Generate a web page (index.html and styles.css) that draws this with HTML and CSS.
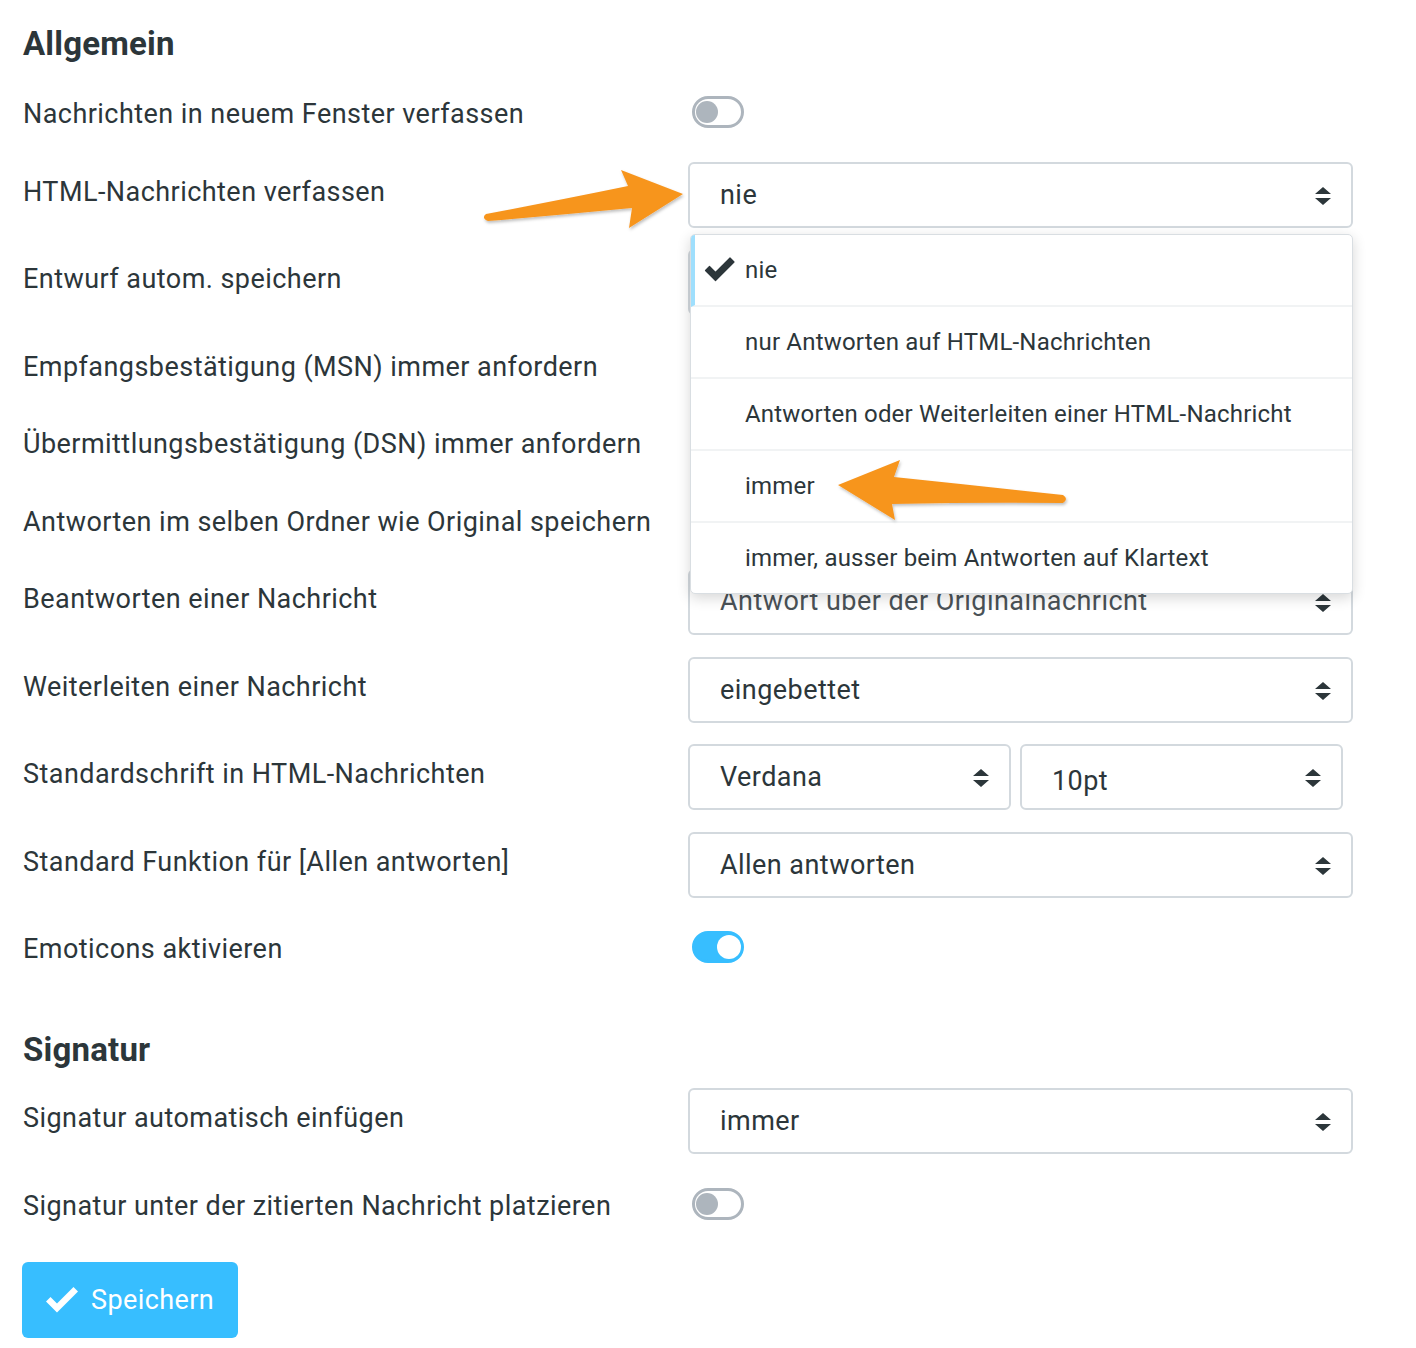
FILE: index.html
```html
<!DOCTYPE html>
<html lang="de">
<head>
<meta charset="utf-8">
<title>Einstellungen</title>
<link rel="stylesheet" href="styles.css">
</head>
<body>
<div class="page">
  <h2 class="section-title">Allgemein</h2>

  <div class="row row-toggle">
    <div class="label">Nachrichten in neuem Fenster verfassen</div>
    <div class="control"><span class="switch"></span></div>
  </div>

  <div class="row row-select">
    <div class="label">HTML-Nachrichten verfassen</div>
    <div class="control">
      <div class="select">nie<span class="caret"><svg viewBox="0 0 16 20" width="16" height="20"><path d="M8 1 L16 8 L0 8 Z M0 12 L16 12 L8 19 Z" fill="#2c363a"/></svg></span></div>
      <div class="menu">
        <div class="menu-item selected"><svg class="check" viewBox="0 0 32 26" width="32" height="26"><path d="M1.5 13.5 L5.5 9.5 L11.5 15.5 L26 1 L30 5 L11.5 23.5 Z" fill="#2c363a" stroke="#2c363a" stroke-width="1.2" stroke-linejoin="round"/></svg>nie</div>
        <div class="menu-item">nur Antworten auf HTML-Nachrichten</div>
        <div class="menu-item">Antworten oder Weiterleiten einer HTML-Nachricht</div>
        <div class="menu-item">immer</div>
        <div class="menu-item last">immer, ausser beim Antworten auf Klartext</div>
      </div>
    </div>
  </div>

  <div class="row row-select">
    <div class="label">Entwurf autom. speichern</div>
    <div class="control"><div class="select"><span class="caret"><svg viewBox="0 0 16 20" width="16" height="20"><path d="M8 1 L16 8 L0 8 Z M0 12 L16 12 L8 19 Z" fill="#2c363a"/></svg></span></div></div>
  </div>

  <div class="row row-toggle">
    <div class="label">Empfangsbestätigung (MSN) immer anfordern</div>
    <div class="control"><span class="switch"></span></div>
  </div>

  <div class="row row-toggle">
    <div class="label">Übermittlungsbestätigung (DSN) immer anfordern</div>
    <div class="control"><span class="switch"></span></div>
  </div>

  <div class="row row-toggle">
    <div class="label">Antworten im selben Ordner wie Original speichern</div>
    <div class="control"><span class="switch"></span></div>
  </div>

  <div class="row row-select">
    <div class="label">Beantworten einer Nachricht</div>
    <div class="control"><div class="select select-dim">Antwort über der Originalnachricht<span class="caret"><svg viewBox="0 0 16 20" width="16" height="20"><path d="M8 1 L16 8 L0 8 Z M0 12 L16 12 L8 19 Z" fill="#2c363a"/></svg></span></div></div>
  </div>

  <div class="row row-select">
    <div class="label">Weiterleiten einer Nachricht</div>
    <div class="control"><div class="select">eingebettet<span class="caret"><svg viewBox="0 0 16 20" width="16" height="20"><path d="M8 1 L16 8 L0 8 Z M0 12 L16 12 L8 19 Z" fill="#2c363a"/></svg></span></div></div>
  </div>

  <div class="row row-select">
    <div class="label">Standardschrift in HTML-Nachrichten</div>
    <div class="control control-split">
      <div class="select select-half">Verdana<span class="caret"><svg viewBox="0 0 16 20" width="16" height="20"><path d="M8 1 L16 8 L0 8 Z M0 12 L16 12 L8 19 Z" fill="#2c363a"/></svg></span></div>
      <div class="select select-half select-low">10pt<span class="caret"><svg viewBox="0 0 16 20" width="16" height="20"><path d="M8 1 L16 8 L0 8 Z M0 12 L16 12 L8 19 Z" fill="#2c363a"/></svg></span></div>
    </div>
  </div>

  <div class="row row-select">
    <div class="label">Standard Funktion für [Allen antworten]</div>
    <div class="control"><div class="select">Allen antworten<span class="caret"><svg viewBox="0 0 16 20" width="16" height="20"><path d="M8 1 L16 8 L0 8 Z M0 12 L16 12 L8 19 Z" fill="#2c363a"/></svg></span></div></div>
  </div>

  <div class="row row-toggle">
    <div class="label">Emoticons aktivieren</div>
    <div class="control"><span class="switch on"></span></div>
  </div>

  <h2 class="section-title second">Signatur</h2>

  <div class="row row-select">
    <div class="label">Signatur automatisch einfügen</div>
    <div class="control"><div class="select">immer<span class="caret"><svg viewBox="0 0 16 20" width="16" height="20"><path d="M8 1 L16 8 L0 8 Z M0 12 L16 12 L8 19 Z" fill="#2c363a"/></svg></span></div></div>
  </div>

  <div class="row row-toggle">
    <div class="label">Signatur unter der zitierten Nachricht platzieren</div>
    <div class="control"><span class="switch"></span></div>
  </div>

  <button class="save-btn" type="button"><svg class="save-icon" viewBox="0 0 36 28" width="36" height="28"><path d="M2 15.5 L6.5 11 L13 17.5 L29.5 1 L34 5.5 L13 26.5 Z" fill="#ffffff"/></svg><span>Speichern</span></button>
</div>

<svg class="annotations" width="1416" height="1348" viewBox="0 0 1416 1348">
  <defs>
    <filter id="sh" x="-10%" y="-20%" width="120%" height="140%">
      <feDropShadow dx="1" dy="2" stdDeviation="1.5" flood-color="#000" flood-opacity="0.25"/>
    </filter>
  </defs>
  <path filter="url(#sh)" fill="#f7951f" d="M 486 214 Q 560 200 628 186 L 621 170 L 683 194 L 629 228 L 632 208 Q 560 215 488 221 Q 481 218 486 214 Z"/>
  <path filter="url(#sh)" fill="#f7951f" d="M 838 485 L 900 460 L 894 477 Q 980 486 1063 495 Q 1069 499 1063 503 Q 980 502 892 504 L 895 520 Z"/>
</svg>
</body>
</html>
```
FILE: styles.css
```css
html, body {
  margin: 0;
  padding: 0;
  background: #ffffff;
}
body {
  font-family: Roboto, "Liberation Sans", Arial, sans-serif;
  color: #2c363a;
  position: relative;
  width: 1416px;
  min-height: 1348px;
  overflow: hidden;
}
.page {
  padding: 24px 0 0 23px;
  display: flex;
  flex-direction: column;
  align-items: flex-start;
}
.section-title {
  margin: 0 0 20px 0;
  font-size: 33px;
  line-height: 40px;
  font-weight: 700;
  color: #2c363a;
  letter-spacing: 0.2px;
}
.section-title.second {
  margin-top: 33.5px;
  margin-bottom: 18px;
}
.row {
  display: flex;
  align-items: flex-start;
  margin-bottom: 21.5px;
}
.row-toggle {
  min-height: 56px;
}
.row-select {
  height: 66px;
}
.label {
  width: 665px;
  padding-top: 11px;
  font-size: 27px;
  line-height: 39px;
  letter-spacing: 0.45px;
  white-space: nowrap;
}
.control {
  position: relative;
  width: 665px;
}
.control-split {
  display: flex;
  gap: 9px;
}
.select {
  box-sizing: border-box;
  height: 66px;
  width: 665px;
  border: 2px solid #d3d9de;
  border-radius: 6px;
  padding-left: 30px;
  display: flex;
  align-items: center;
  font-size: 27px;
  letter-spacing: 0.45px;
  position: relative;
  background: #fff;
}
.select-dim {
  color: #4a5257;
  padding-top: 0;
  align-items: flex-start;
  line-height: 60px;
}
.select-half {
  width: 323px;
}
.select-low {
  padding-top: 7px;
}
.caret {
  position: absolute;
  right: 20px;
  top: 22px;
  width: 16px;
  height: 20px;
}
.caret svg {
  display: block;
}
.switch {
  display: block;
  box-sizing: border-box;
  margin-top: 12px;
  margin-left: 4px;
  width: 52px;
  height: 32px;
  border: 3px solid #adb5bd;
  border-radius: 16px;
  position: relative;
  background: #fff;
}
.switch::after {
  content: "";
  position: absolute;
  left: 1px;
  top: 2px;
  width: 22px;
  height: 22px;
  border-radius: 50%;
  background: #adb5bd;
}
.switch.on {
  background: #37beff;
  border-color: #37beff;
}
.switch.on::after {
  left: auto;
  right: 0px;
  top: 1px;
  width: 24px;
  height: 24px;
  background: #ffffff;
}
.menu {
  position: absolute;
  top: 72px;
  left: 2px;
  right: 0;
  background: #ffffff;
  border: 1px solid #d9dee2;
  border-radius: 5px;
  box-shadow: 0 4px 14px rgba(0, 0, 0, 0.16);
  z-index: 5;
  overflow: hidden;
}
.menu-item {
  height: 72px;
  box-sizing: border-box;
  display: flex;
  align-items: center;
  padding-left: 54px;
  font-size: 24px;
  letter-spacing: 0.2px;
  border-bottom: 2px solid #f1f3f4;
  position: relative;
}
.menu-item.last {
  border-bottom: 0;
  height: 70px;
}
.menu-item.selected {
  border-left: 4px solid #9fdffd;
  padding-left: 50px;
}
.check {
  position: absolute;
  left: 9px;
  top: 22px;
}
.save-btn {
  margin-top: 9px;
  margin-left: -1px;
  width: 216px;
  height: 76px;
  border: 0;
  border-radius: 6px;
  background: #37beff;
  color: #ffffff;
  font-family: Roboto, "Liberation Sans", Arial, sans-serif;
  font-size: 27px;
  letter-spacing: 0.4px;
  display: flex;
  align-items: center;
  padding: 0 0 0 22px;
  gap: 11px;
  cursor: pointer;
}
.save-icon {
  display: block;
}
.annotations {
  position: absolute;
  left: 0;
  top: 0;
  pointer-events: none;
  z-index: 10;
}
```
